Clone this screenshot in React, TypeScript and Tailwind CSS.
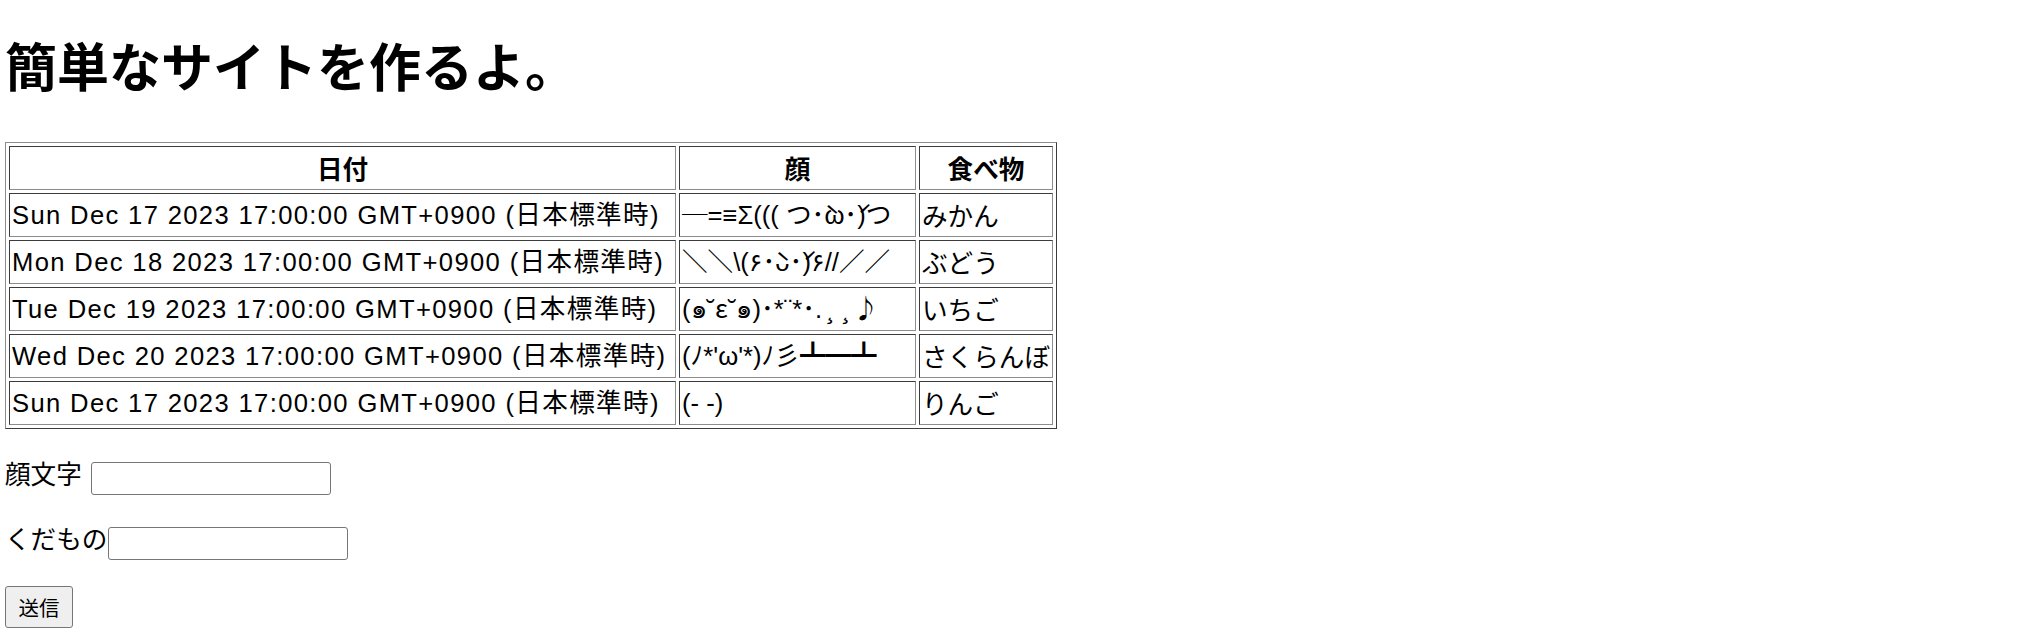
import React from "react";

const cjk = "font-['Noto_Sans_CJK_JP',sans-serif] leading-[20px]";

const rows: { date: string; face: React.ReactNode; food: string }[] = [
  {
    date: "Sun Dec 17 2023 17:00:00 GMT+0900 (日本標準時)",
    face: (
      <>
        <span className={cjk}>─</span>=≡Σ((( つ･̀ω･́)つ
      </>
    ),
    food: "みかん",
  },
  { date: "Mon Dec 18 2023 17:00:00 GMT+0900 (日本標準時)", face: "＼＼\\(۶･̀ᴗ･́)۶//／／", food: "ぶどう" },
  {
    date: "Tue Dec 19 2023 17:00:00 GMT+0900 (日本標準時)",
    face: (
      <>
        (๑<span className={cjk}>˘ε˘</span>๑)･*¨*･.<span className={cjk}>¸¸♪</span>
      </>
    ),
    food: "いちご",
  },
  { date: "Wed Dec 20 2023 17:00:00 GMT+0900 (日本標準時)", face: "(ﾉ*'ω'*)ﾉ彡┻━┻", food: "さくらんぼ" },
  { date: "Sun Dec 17 2023 17:00:00 GMT+0900 (日本標準時)", face: "(- -)", food: "りんご" },
];

const cell =
  "h-[44px] p-[2px] leading-[38px] whitespace-nowrap border border-t-[#3c3c3c] border-l-[#3c3c3c] border-b-[#8c8c8c] border-r-[#8c8c8c]";

export default function App() {
  return (
    <div className="min-h-screen bg-white text-black pl-[5px] font-['Liberation_Sans','Noto_Sans_CJK_JP','DejaVu_Sans',sans-serif]">
      <h1 className="mt-[28px] text-[52px] font-bold leading-[74px] font-['Noto_Sans_CJK_JP',sans-serif]">
        簡単なサイトを作るよ。
      </h1>
      <table className="mt-[40px] table-fixed border-separate border-spacing-[3px] border border-t-[#8c8c8c] border-l-[#8c8c8c] border-b-[#3c3c3c] border-r-[#3c3c3c] text-[25.6px]">
        <thead>
          <tr>
            <th className={`${cell} w-[667px] text-center font-bold font-['Noto_Sans_CJK_JP',sans-serif]`}>日付</th>
            <th className={`${cell} w-[237px] text-center font-bold font-['Noto_Sans_CJK_JP',sans-serif]`}>顔</th>
            <th className={`${cell} w-[133px] text-center font-bold font-['Noto_Sans_CJK_JP',sans-serif]`}>食べ物</th>
          </tr>
        </thead>
        <tbody>
          {rows.map((r, i) => (
            <tr key={i}>
              <td className={`${cell} text-left tracking-[1.35px]`}>{r.date}</td>
              <td className={`${cell} text-left`}>{r.face}</td>
              <td className={`${cell} text-left font-['Noto_Sans_CJK_JP',sans-serif]`}>{r.food}</td>
            </tr>
          ))}
        </tbody>
      </table>
      <form className="flex flex-col items-start">
        <div className="mt-[33px] flex items-center h-[33px]">
          <span className="text-[25.6px] pb-[10px] font-['Noto_Sans_CJK_JP',sans-serif]">顔文字</span>
          <input
            type="text"
            className="ml-[9px] w-[240px] h-[33px] border border-[#767676] rounded-[3px] bg-white"
          />
        </div>
        <div className="mt-[32px] flex items-center h-[33px]">
          <span className="text-[25.6px] pb-[10px] font-['Noto_Sans_CJK_JP',sans-serif]">くだもの</span>
          <input
            type="text"
            className="ml-[1px] w-[240px] h-[33px] border border-[#767676] rounded-[3px] bg-white"
          />
        </div>
        <button
          type="button"
          className="mt-[26px] w-[68px] h-[42px] border border-[#767676] rounded-[3px] bg-[#efefef] text-[20.5px] leading-none font-['Noto_Sans_CJK_JP',sans-serif]"
        >
          送信
        </button>
      </form>
    </div>
  );
}
